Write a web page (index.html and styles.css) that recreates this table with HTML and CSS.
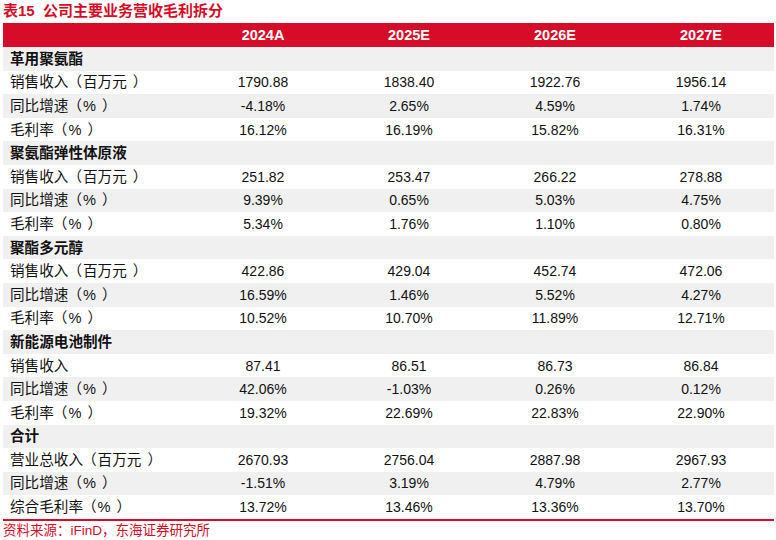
FILE: index.html
```html
<!DOCTYPE html>
<html lang="zh">
<head>
<meta charset="utf-8">
<link rel="stylesheet" href="styles.css">
</head>
<body>
<div class="title">表15&nbsp; 公司主要业务营收毛利拆分</div>
<table class="fin">
  <colgroup>
    <col class="c-label"><col class="c-num"><col class="c-num"><col class="c-num"><col class="c-num">
  </colgroup>
  <thead>
    <tr><th></th><th>2024A</th><th>2025E</th><th>2026E</th><th>2027E</th></tr>
  </thead>
  <tbody>
    <tr class="grp"><td>革用聚氨酯</td><td></td><td></td><td></td><td></td></tr>
    <tr><td>销售收入<span class="lp">（</span>百万元<span class="rp">）</span></td><td>1790.88</td><td>1838.40</td><td>1922.76</td><td>1956.14</td></tr>
    <tr class="alt"><td>同比增速<span class="lp">（</span>%<span class="rp">）</span></td><td>-4.18%</td><td>2.65%</td><td>4.59%</td><td>1.74%</td></tr>
    <tr><td>毛利率<span class="lp">（</span>%<span class="rp">）</span></td><td>16.12%</td><td>16.19%</td><td>15.82%</td><td>16.31%</td></tr>
    <tr class="grp"><td>聚氨酯弹性体原液</td><td></td><td></td><td></td><td></td></tr>
    <tr><td>销售收入<span class="lp">（</span>百万元<span class="rp">）</span></td><td>251.82</td><td>253.47</td><td>266.22</td><td>278.88</td></tr>
    <tr class="alt"><td>同比增速<span class="lp">（</span>%<span class="rp">）</span></td><td>9.39%</td><td>0.65%</td><td>5.03%</td><td>4.75%</td></tr>
    <tr><td>毛利率<span class="lp">（</span>%<span class="rp">）</span></td><td>5.34%</td><td>1.76%</td><td>1.10%</td><td>0.80%</td></tr>
    <tr class="grp"><td>聚酯多元醇</td><td></td><td></td><td></td><td></td></tr>
    <tr><td>销售收入<span class="lp">（</span>百万元<span class="rp">）</span></td><td>422.86</td><td>429.04</td><td>452.74</td><td>472.06</td></tr>
    <tr class="alt"><td>同比增速<span class="lp">（</span>%<span class="rp">）</span></td><td>16.59%</td><td>1.46%</td><td>5.52%</td><td>4.27%</td></tr>
    <tr><td>毛利率<span class="lp">（</span>%<span class="rp">）</span></td><td>10.52%</td><td>10.70%</td><td>11.89%</td><td>12.71%</td></tr>
    <tr class="grp"><td>新能源电池制件</td><td></td><td></td><td></td><td></td></tr>
    <tr><td>销售收入</td><td>87.41</td><td>86.51</td><td>86.73</td><td>86.84</td></tr>
    <tr class="alt"><td>同比增速<span class="lp">（</span>%<span class="rp">）</span></td><td>42.06%</td><td>-1.03%</td><td>0.26%</td><td>0.12%</td></tr>
    <tr><td>毛利率<span class="lp">（</span>%<span class="rp">）</span></td><td>19.32%</td><td>22.69%</td><td>22.83%</td><td>22.90%</td></tr>
    <tr class="grp"><td>合计</td><td></td><td></td><td></td><td></td></tr>
    <tr><td>营业总收入<span class="lp">（</span>百万元<span class="rp">）</span></td><td>2670.93</td><td>2756.04</td><td>2887.98</td><td>2967.93</td></tr>
    <tr class="alt"><td>同比增速<span class="lp">（</span>%<span class="rp">）</span></td><td>-1.51%</td><td>3.19%</td><td>4.79%</td><td>2.77%</td></tr>
    <tr><td>综合毛利率<span class="lp">（</span>%<span class="rp">）</span></td><td>13.72%</td><td>13.46%</td><td>13.36%</td><td>13.70%</td></tr>
  </tbody>
</table>
<div class="source">资料来源：iFinD，东海证券研究所</div>
</body>
</html>
```
FILE: styles.css
```css
html, body {
  margin: 0;
  padding: 0;
  background: #ffffff;
}
body {
  font-family: "Liberation Sans", "Noto Sans CJK SC", sans-serif;
  color: #111111;
}
.title {
  height: 23px;
  line-height: 22px;
  padding-left: 3px;
  font-size: 15px;
  font-weight: bold;
  color: #d70c28;
  white-space: nowrap;
}
.fin {
  margin-left: 3px;
  width: 771px;
  table-layout: fixed;
  border-collapse: collapse;
  border-bottom: 2px solid #d70c28;
}
.c-label { width: 187px; }
.c-num { width: 146px; }
.fin th {
  height: 24px;
  padding: 0;
  background: #d70c28;
  color: #ffffff;
  font-size: 14.5px;
  font-weight: bold;
  text-align: center;
}
.fin td {
  height: 23.6px;
  padding: 0;
  font-size: 14px;
  text-align: center;
  white-space: nowrap;
  line-height: 16px;
}
.fin td:first-child {
  text-align: left;
  padding-left: 7px;
  font-size: 14.6px;
}
.lp {
  margin-left: -1px;
  margin-right: 1px;
}
.rp {
  margin-left: 6px;
  margin-right: -6px;
}
.fin tr.grp td {
  background: #f0f0f0;
  font-weight: bold;
}
.fin tr.alt td {
  background: #f0f0f0;
}
.source {
  padding-left: 3px;
  margin-top: 1px;
  font-size: 13.5px;
  line-height: 18px;
  color: #d70c28;
  white-space: nowrap;
}
```
